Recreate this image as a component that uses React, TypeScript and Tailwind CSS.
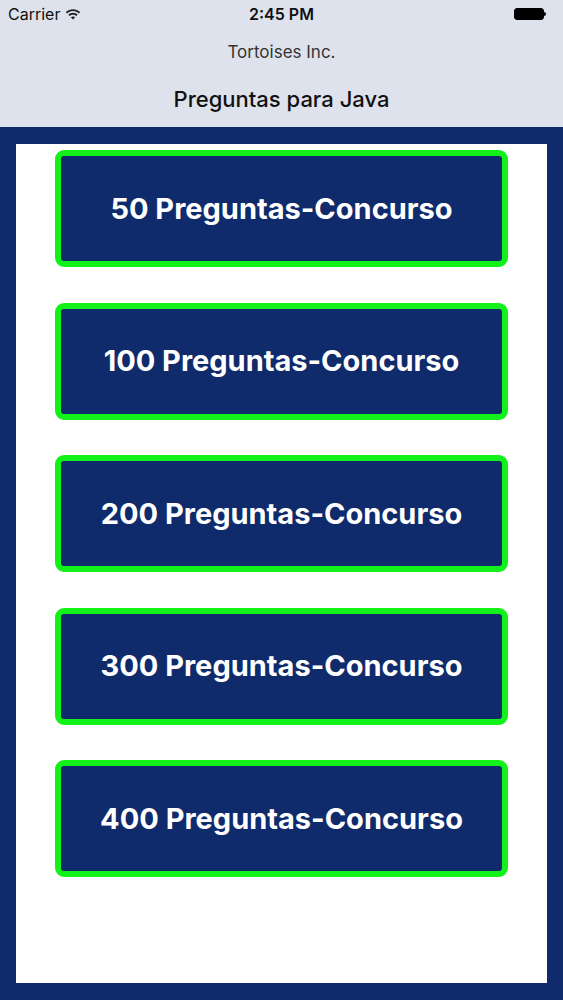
const counts = [50, 100, 200, 300, 400];

function WifiIcon() {
  return (
    <svg width="16" height="12" viewBox="0 0 16 12" fill="#222">
      <path d="M8 1.2C5.2 1.2 2.7 2.3 0.8 4.1L2.1 5.5C3.6 4 5.7 3.1 8 3.1s4.4.9 5.9 2.4l1.3-1.4C13.3 2.3 10.8 1.2 8 1.2z" />
      <path d="M8 4.8c-1.8 0-3.4.7-4.6 1.9l1.3 1.4C5.6 7.2 6.7 6.7 8 6.7s2.4.5 3.3 1.4l1.3-1.4C11.4 5.5 9.8 4.8 8 4.8z" />
      <path d="M8 8.4c-.9 0-1.6.3-2.2.9L8 11.6l2.2-2.3C9.6 8.7 8.9 8.4 8 8.4z" />
    </svg>
  );
}

function StatusBar() {
  return (
    <div className="relative flex h-[28px] items-center px-2 text-[16px] text-[#111]">
      <div className="flex items-center gap-[5px]">
        <span>Carrier</span>
        <WifiIcon />
      </div>
      <span className="absolute left-1/2 -translate-x-1/2 font-semibold">2:45 PM</span>
      <div className="ml-auto mr-[9px] flex items-center">
        <div className="h-[12px] w-[30px] rounded-[3px] border border-black bg-black" />
        <div className="h-[4px] w-[2px] rounded-r-sm bg-black" />
      </div>
    </div>
  );
}

export default function App() {
  return (
    <div
      className="flex h-[1000px] w-[563px] flex-col bg-[#0f2b6b]"
      style={{ fontFamily: "Inter, 'Noto Sans', sans-serif" }}
    >
      <div className="h-[127px] bg-[#dee2ec]">
        <StatusBar />
        <div className="mt-[13px] text-center text-[17px] leading-[22px] text-[#333]">Tortoises Inc.</div>
        <div className="mt-[22px] text-center text-[22px] leading-[28px] font-medium text-[#111]">
          Preguntas para Java
        </div>
      </div>
      <div className="mx-[16px] mt-[17px] mb-[17px] flex flex-1 flex-col items-center gap-[35.5px] bg-white pt-[6px]">
        {counts.map((n) => (
          <button
            key={n}
            type="button"
            className="flex h-[117px] w-[453px] items-center justify-center rounded-[9px] border-[6px] border-[#12f21a] bg-[#0f2b6b] text-[29px] font-bold text-white"
          >
            {n} Preguntas-Concurso
          </button>
        ))}
      </div>
    </div>
  );
}
